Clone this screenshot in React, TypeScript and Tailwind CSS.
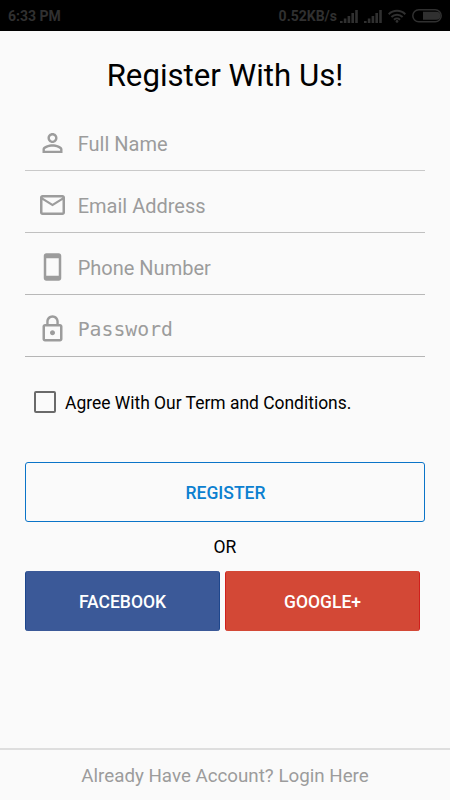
import type { ReactNode } from "react";

const fields = [
  {
    id: "name",
    label: "Full Name",
    font: "font-['Roboto',sans-serif] text-[20px]",
    line: "border-[#c9c9c9]",
    icon: "M12 5.9c1.16 0 2.1.94 2.1 2.1s-.94 2.1-2.1 2.1S9.9 9.16 9.9 8s.94-2.1 2.1-2.1m0 9c2.97 0 6.1 1.46 6.1 2.1v1.1H5.9V17c0-.64 3.13-2.1 6.1-2.1M12 4C9.79 4 8 5.79 8 8s1.79 4 4 4 4-1.79 4-4-1.79-4-4-4zm0 9c-2.67 0-8 1.34-8 4v3h16v-3c0-2.66-5.33-4-8-4z",
  },
  {
    id: "email",
    label: "Email Address",
    font: "font-['Roboto',sans-serif] text-[20px]",
    line: "border-[#c0c0c0]",
    icon: "M20 4H4c-1.1 0-1.99.9-1.99 2L2 18c0 1.1.9 2 2 2h16c1.1 0 2-.9 2-2V6c0-1.1-.9-2-2-2zm0 14H4V8l8 5 8-5v10zm-8-7L4 6h16l-8 5z",
  },
  {
    id: "phone",
    label: "Phone Number",
    font: "font-['Roboto',sans-serif] text-[20px]",
    line: "border-[#b8b8b8]",
    icon: "M17 1.01L7 1c-1.1 0-1.99.9-1.99 2v18c0 1.1.89 2 1.99 2h10c1.1 0 2-.9 2-2V3c0-1.1-.9-1.99-2-1.99zM17 19H7V5h10v14z",
  },
  {
    id: "password",
    label: "Password",
    font: "font-['DejaVu_Sans_Mono',monospace] text-[19.8px]",
    line: "border-[#b5b5b5]",
    icon: "M12 17c1.1 0 2-.9 2-2s-.9-2-2-2-2 .9-2 2 .9 2 2 2zm6-9h-1V6c0-2.76-2.24-5-5-5S7 3.24 7 6v2H6c-1.1 0-2 .9-2 2v10c0 1.1.9 2 2 2h12c1.1 0 2-.9 2-2V10c0-1.1-.9-2-2-2zM8.9 6c0-1.71 1.39-3.1 3.1-3.1s3.1 1.39 3.1 3.1v2H8.9V6zM18 20H6V10h12v10z",
  },
];

function Signal() {
  return (
    <svg width="18" height="13" viewBox="0 0 18 13" fill="currentColor">
      <rect x="0" y="11" width="2.6" height="2" />
      <rect x="3.8" y="8.5" width="2.6" height="4.5" />
      <rect x="7.6" y="6" width="2.6" height="7" />
      <rect x="11.4" y="3" width="2.6" height="10" />
      <rect x="15.2" y="0" width="2.6" height="13" />
    </svg>
  );
}

function StatusBar() {
  return (
    <div className="flex h-[31px] items-center bg-black pt-[1px] pr-[8px] pl-[8px] text-[#303030]">
      <span className="text-[14px] font-bold">6:33 PM</span>
      <div className="ml-auto flex items-center">
        <span className="text-[14px] font-bold">0.52KB/s</span>
        <div className="ml-[3px]">
          <Signal />
        </div>
        <div className="ml-[6px]">
          <Signal />
        </div>
        <svg
          className="ml-[6px]"
          width="18"
          height="14"
          viewBox="0 0 18 14"
          fill="none"
          stroke="currentColor"
          strokeWidth="2"
        >
          <path d="M.7 5.2a11.8 11.8 0 0 1 16.6 0M3.4 8a8 8 0 0 1 11.2 0M6 10.7a4.4 4.4 0 0 1 6 0" />
          <circle cx="9" cy="12.4" r="1.4" fill="currentColor" stroke="none" />
        </svg>
        <svg
          className="ml-[6px]"
          width="30"
          height="14"
          viewBox="0 0 30 14"
        >
          <rect
            x=".8"
            y=".8"
            width="28.4"
            height="12"
            rx="6"
            fill="none"
            stroke="currentColor"
            strokeWidth="1.5"
          />
          <path d="M11 2.8h13.4a4 4 0 0 1 0 8H11z" fill="currentColor" />
        </svg>
      </div>
    </div>
  );
}

function SocialButton({
  className,
  children,
}: {
  className: string;
  children: ReactNode;
}) {
  return (
    <button
      className={`h-[60px] w-[195px] rounded-[3px] border-x pt-[2px] text-[17.5px] font-medium text-white ${className}`}
    >
      {children}
    </button>
  );
}

export default function App() {
  return (
    <div className="flex h-[800px] w-[450px] flex-col overflow-hidden bg-[#fafafa] font-['Roboto',sans-serif] text-black">
      <StatusBar />

      <main className="flex flex-1 flex-col px-[25px]">
        <h1 className="mt-[25px] text-center text-[31.2px] leading-[40px]">
          Register With Us!
        </h1>

        <div className="mt-[13px]">
          {fields.map((field) => (
            <label
              key={field.id}
              className={`flex h-[62px] items-center border-b pt-[7px] pl-[12px] ${field.line}`}
            >
              <svg
                width="31"
                height="30"
                viewBox="-0.4 0 24.8 24"
                className="fill-[#9c9c9c]"
              >
                <path d={field.icon} />
              </svg>
              <span
                className={`ml-[9.7px] pt-[2px] leading-[30px] text-[#9c9c9c] ${field.font}`}
              >
                {field.label}
              </span>
            </label>
          ))}
        </div>

        <label className="mt-[33px] flex h-[24px] items-center pl-[9px]">
          <span className="size-[22px] rounded-[2px] border-2 border-[#6a6a6a]" />
          <span className="ml-[9px] pt-[2px] text-[17.45px]">
            Agree With Our Term and Conditions.
          </span>
        </label>

        <button className="mt-[48px] h-[60px] rounded-[3px] border border-[#0b74c8] pt-[2px] pl-[1px] text-[17.5px] font-medium text-[#0c80d0]">
          REGISTER
        </button>

        <p className="mt-[13px] text-center text-[17.5px] leading-[24px]">OR</p>

        <div className="mt-[12px] flex gap-[5px]">
          <SocialButton className="border-[#1d468c] bg-[#3b5998]">
            FACEBOOK
          </SocialButton>
          <SocialButton className="border-[#d0201c] bg-[#d34836]">
            GOOGLE+
          </SocialButton>
        </div>
      </main>

      <footer className="flex h-[52px] items-center justify-center border-t-2 border-[#dedede] pt-[3px] text-[18.75px] text-[#9c9c9c]">
        Already Have Account? Login Here
      </footer>
    </div>
  );
}
